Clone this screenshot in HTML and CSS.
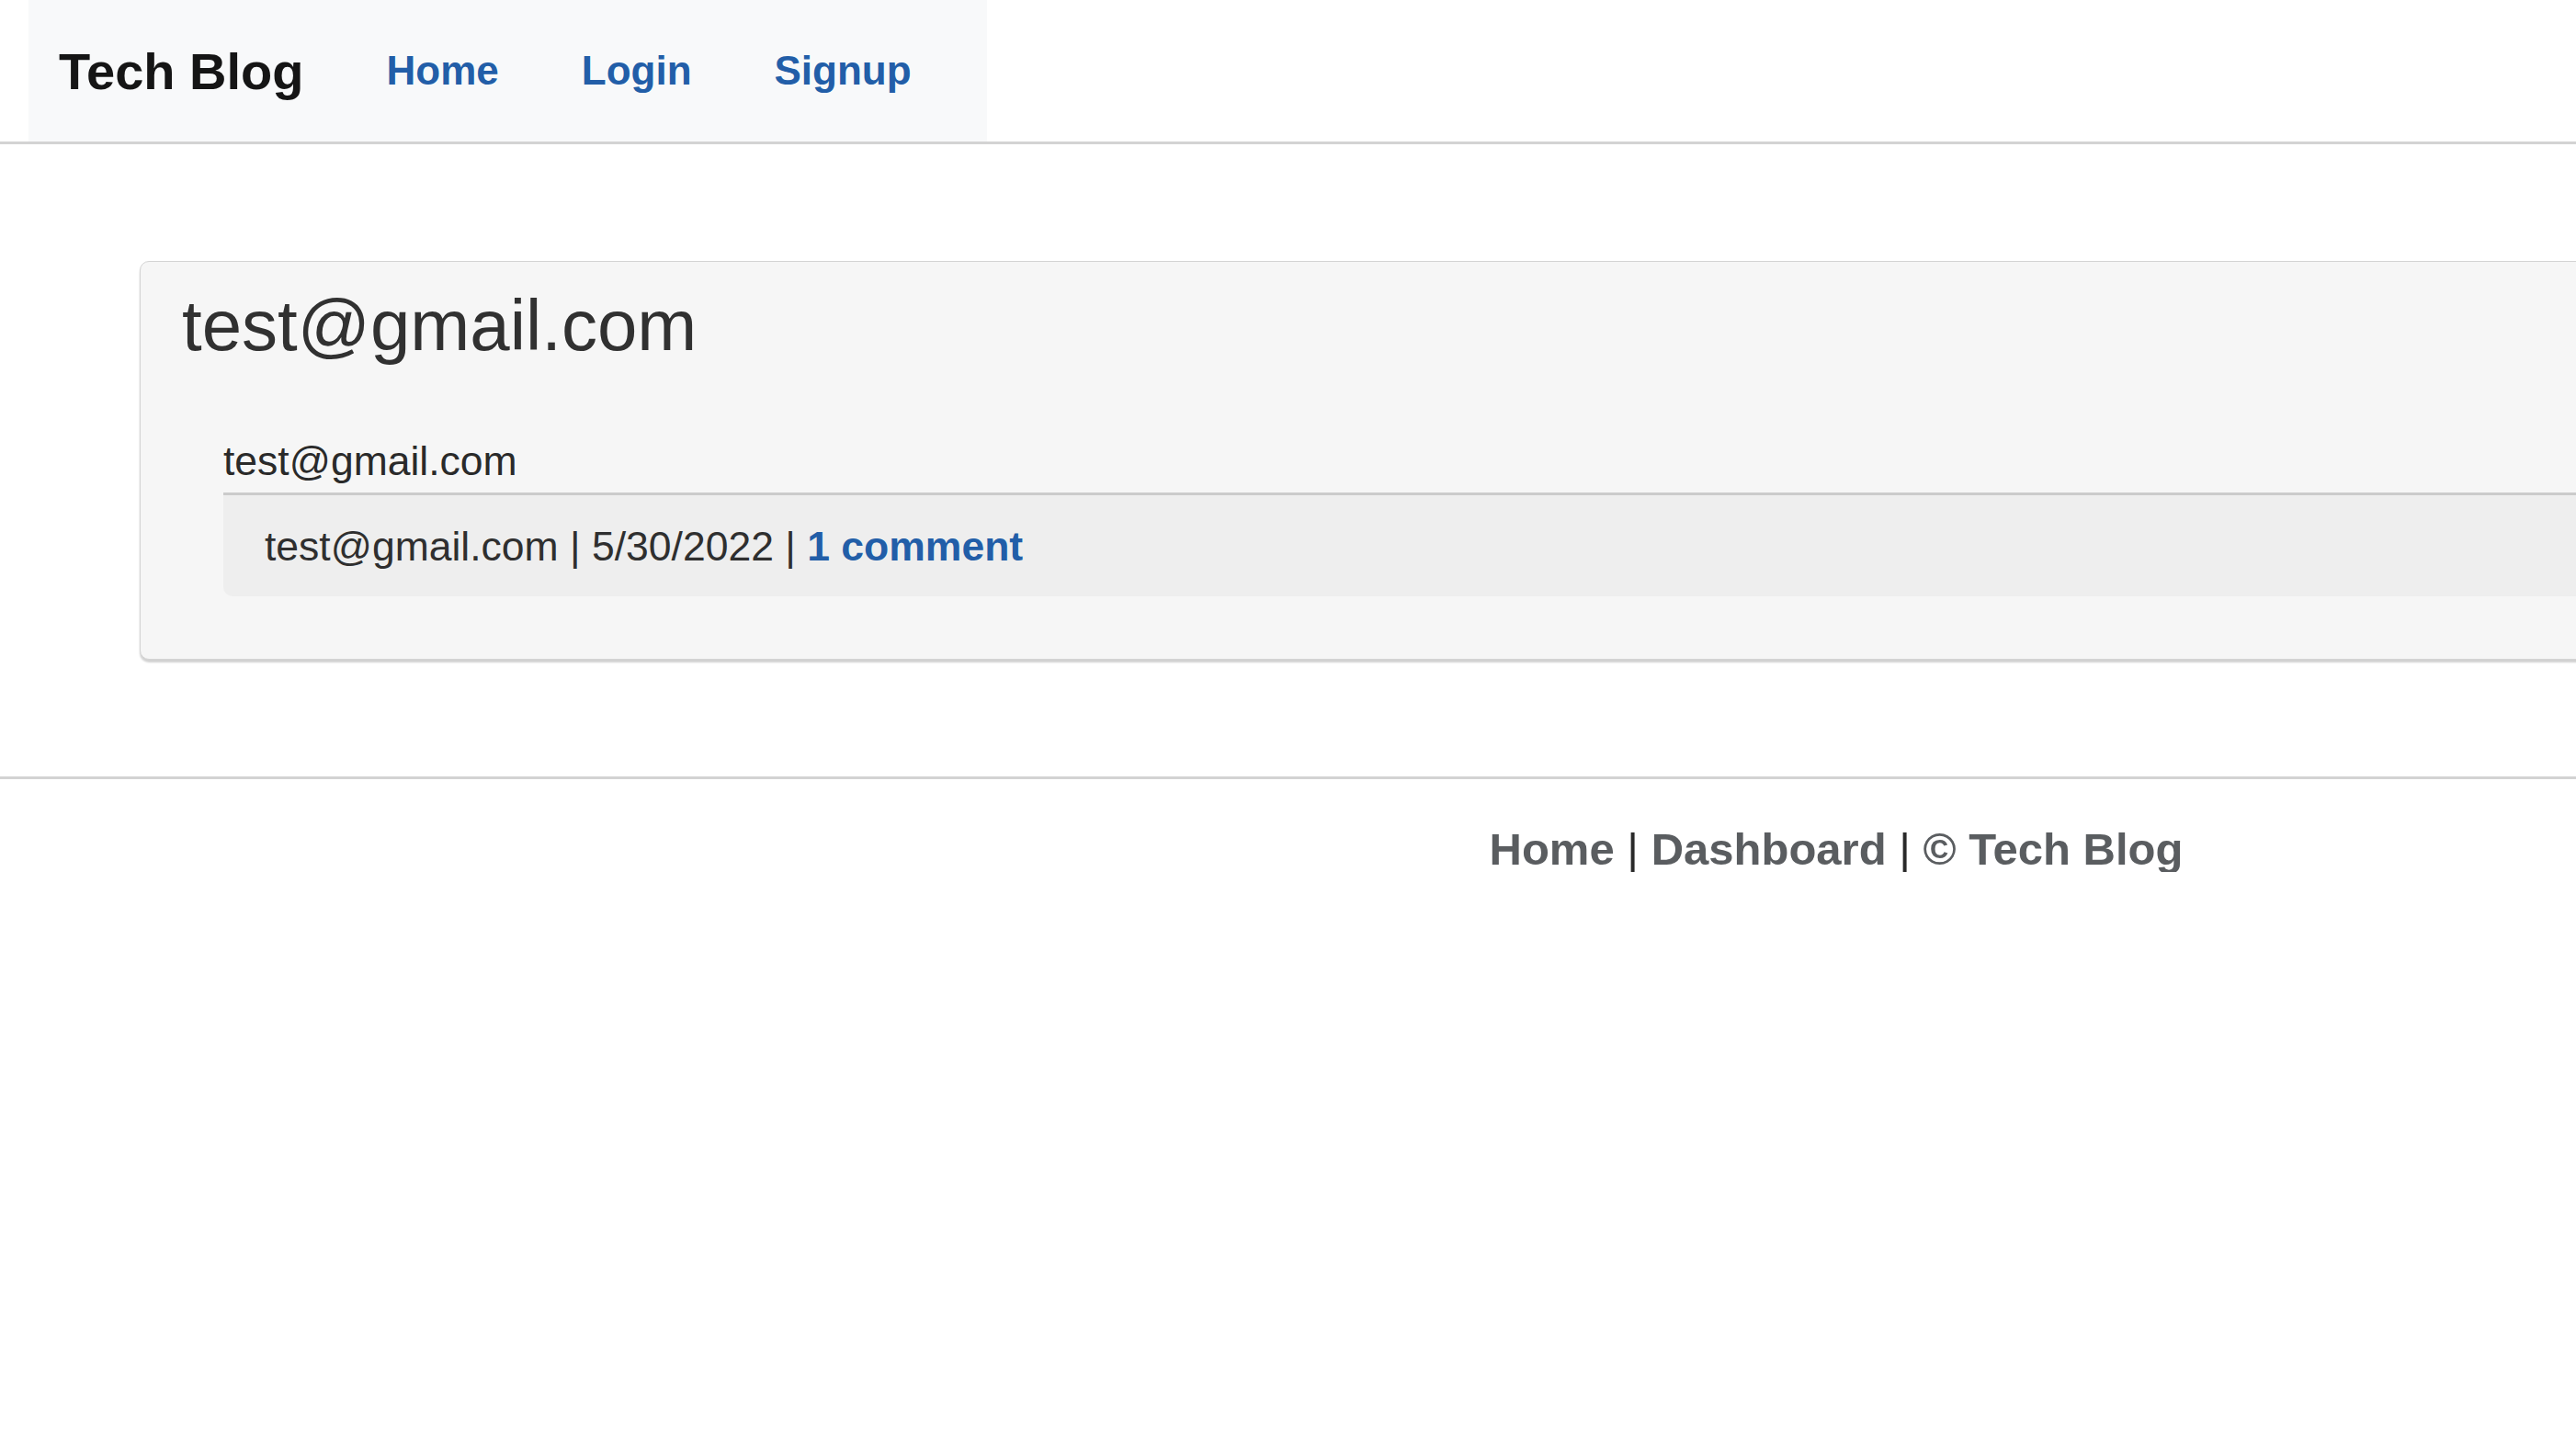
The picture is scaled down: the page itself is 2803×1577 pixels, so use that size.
FILE: index.html
```html
<!DOCTYPE html>
<html lang="en">
<head>
<meta charset="utf-8">
<title>Tech Blog</title>
<link rel="stylesheet" href="styles.css">
</head>
<body>
<div class="page">
  <header class="site-header">
    <nav class="navbar">
      <span class="brand">Tech Blog</span>
      <a class="nav-link" href="#">Home</a>
      <a class="nav-link" href="#">Login</a>
      <a class="nav-link" href="#">Signup</a>
    </nav>
  </header>
  <main class="main">
    <section class="card">
      <h1 class="card-title">test@gmail.com</h1>
      <article class="post">
        <h2 class="post-title">test@gmail.com</h2>
        <div class="post-meta">test@gmail.com <span class="sep">|</span> 5/30/2022 <span class="sep">|</span> <a class="comment-link" href="#">1 comment</a></div>
      </article>
    </section>
  </main>
  <footer class="site-footer">
    <p class="footer-text"><a class="footer-link" href="#">Home</a> <span class="sep">|</span> <a class="footer-link" href="#">Dashboard</a> <span class="sep">|</span> © Tech Blog</p>
  </footer>
</div>
</body>
</html>
```
FILE: styles.css
```css
html, body {
  margin: 0;
  padding: 0;
  overflow: hidden;
  background: #ffffff;
}

body {
  font-family: "Liberation Sans", Arial, Helvetica, sans-serif;
  color: #313131;
}

a {
  text-decoration: none;
}

.page {
  width: 3996px;
}

.site-header {
  padding-left: 31px;
  border-bottom: 3px solid #d3d3d3;
  display: flex;
}

.navbar {
  box-sizing: border-box;
  height: 154px;
  background: #f8f9fa;
  display: flex;
  align-items: center;
  gap: 90px;
  padding: 0 82px 0 33px;
}

.brand {
  font-size: 56px;
  line-height: 1;
  font-weight: 700;
  color: #151515;
  margin-top: 2px;
}

.nav-link {
  font-size: 44px;
  line-height: 1;
  font-weight: 700;
  color: #225ea8;
}

.main {
  padding: 127px 152px 127px 152px;
}

.card {
  background: #f6f6f6;
  border: 1px solid #d4d4d4;
  border-radius: 10px;
  box-shadow: 0 3px 2px rgba(0, 0, 0, 0.18);
  padding: 22px 0 68px 45px;
}

.card-title {
  margin: 0;
  font-size: 78px;
  line-height: 94px;
  font-weight: 400;
  color: #313131;
}

.post {
  margin: 74px 0 0 45px;
}

.post-title {
  margin: 0;
  padding-bottom: 8px;
  font-size: 44.5px;
  line-height: 53px;
  font-weight: 400;
  color: #2a2a2a;
}

.post-meta {
  background: #eeeeee;
  border-top: 3px solid #cbcbcb;
  border-radius: 0 0 0 10px;
  padding: 29px 0 28px 45px;
  font-size: 44.5px;
  line-height: 53px;
  color: #2f2f2f;
}

.comment-link {
  font-weight: 700;
  color: #225ea8;
}

.site-footer {
  border-top: 3px solid #d3d3d3;
  padding-top: 52px;
}

.footer-text {
  margin: 0;
  text-align: center;
  font-size: 49px;
  line-height: 1;
  font-weight: 700;
  color: #5a5d60;
}

.footer-link {
  color: #5a5d60;
}

.footer-text .sep {
  font-weight: 400;
  color: #2a2a2a;
}
```
